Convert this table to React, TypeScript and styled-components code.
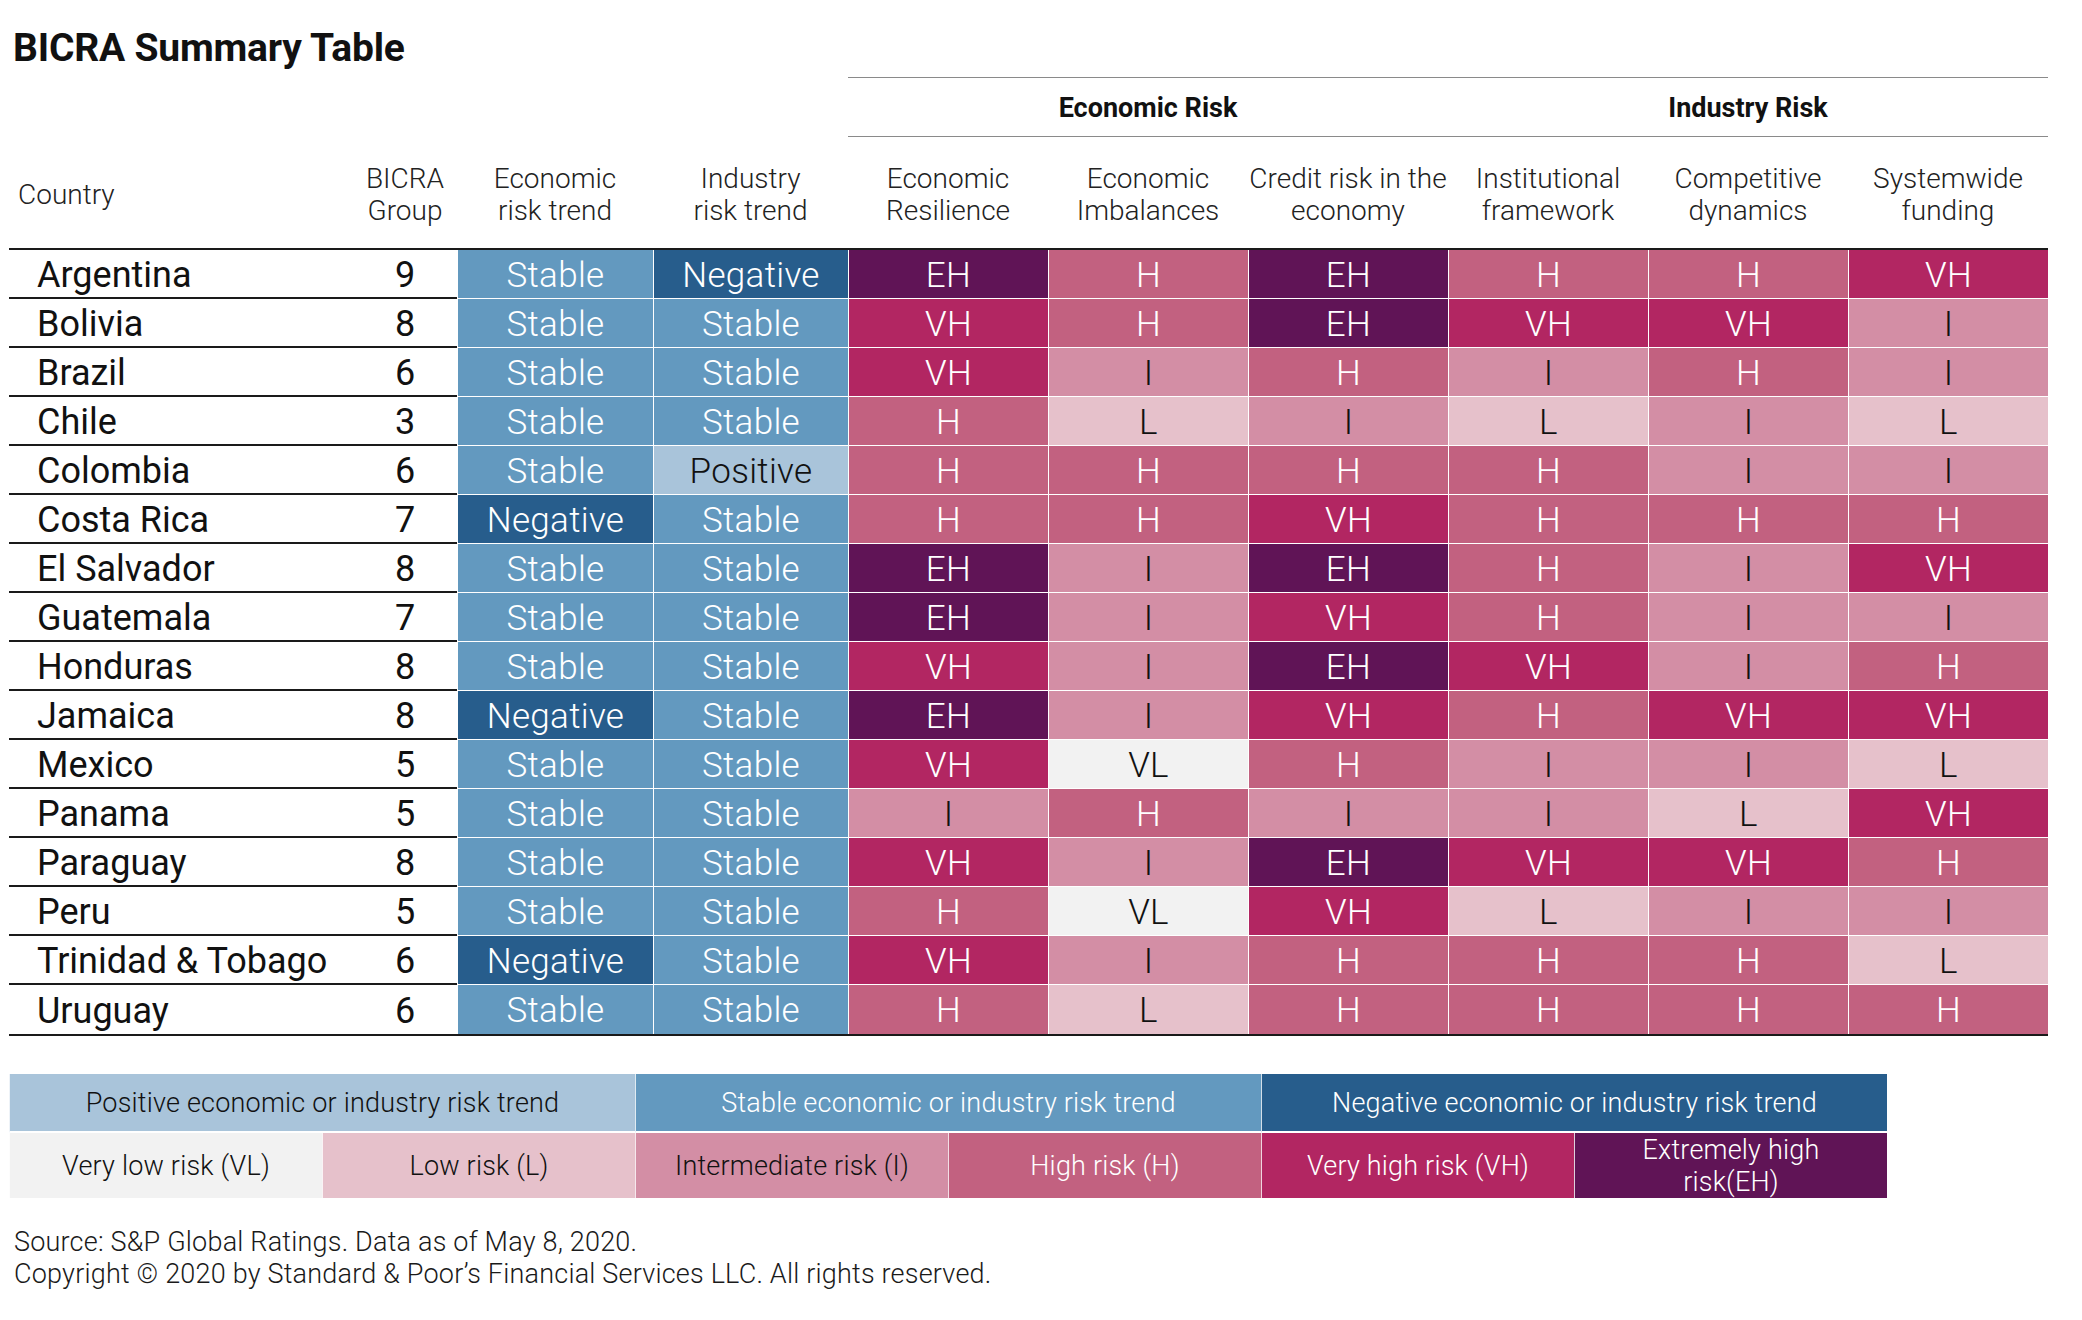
import styled, { createGlobalStyle } from "styled-components";

const GlobalStyle = createGlobalStyle`
  html, body {
    margin: 0;
    padding: 0;
    background: #fff;
  }
  body {
    font-family: Roboto, "Liberation Sans", Arial, sans-serif;
    color: #111;
  }
`;

const COLS = "344px 104px 196px 195px repeat(6, 200px)";

const TONES: Record<string, { bg: string; fg: string }> = {
  Positive: { bg: "#a9c4da", fg: "#111" },
  Stable: { bg: "#6399bf", fg: "#fff" },
  Negative: { bg: "#275d8c", fg: "#fff" },
  VL: { bg: "#f2f2f2", fg: "#111" },
  L: { bg: "#e6c1cb", fg: "#111" },
  I: { bg: "#d38ea5", fg: "#111" },
  H: { bg: "#c26180", fg: "#fff" },
  VH: { bg: "#b22662", fg: "#fff" },
  EH: { bg: "#601456", fg: "#fff" },
};

const DATA = [
  "Argentina|9|Stable|Negative|EH H EH H H VH",
  "Bolivia|8|Stable|Stable|VH H EH VH VH I",
  "Brazil|6|Stable|Stable|VH I H I H I",
  "Chile|3|Stable|Stable|H L I L I L",
  "Colombia|6|Stable|Positive|H H H H I I",
  "Costa Rica|7|Negative|Stable|H H VH H H H",
  "El Salvador|8|Stable|Stable|EH I EH H I VH",
  "Guatemala|7|Stable|Stable|EH I VH H I I",
  "Honduras|8|Stable|Stable|VH I EH VH I H",
  "Jamaica|8|Negative|Stable|EH I VH H VH VH",
  "Mexico|5|Stable|Stable|VH VL H I I L",
  "Panama|5|Stable|Stable|I H I I L VH",
  "Paraguay|8|Stable|Stable|VH I EH VH VH H",
  "Peru|5|Stable|Stable|H VL VH L I I",
  "Trinidad & Tobago|6|Negative|Stable|VH I H H H L",
  "Uruguay|6|Stable|Stable|H L H H H H",
].map((line) => {
  const [country, group, econ, ind, risks] = line.split("|");
  return { country, group, econ, ind, risks: risks.split(" ") };
});

const HEADERS = [
  ["BICRA", "Group"],
  ["Economic", "risk trend"],
  ["Industry", "risk trend"],
  ["Economic", "Resilience"],
  ["Economic", "Imbalances"],
  ["Credit risk in the", "economy"],
  ["Institutional", "framework"],
  ["Competitive", "dynamics"],
  ["Systemwide", "funding"],
];

const Page = styled.div`
  padding: 0 0 40px 9px;
  width: 2039px;
`;

const TitleBar = styled.div`
  height: 77px;
  box-sizing: border-box;
  padding: 29px 0 0 4px;
`;

const Title = styled.h1`
  margin: 0;
  font-size: 39px;
  line-height: 1;
  font-weight: 700;
  letter-spacing: -0.2px;
  color: #111;
`;

const GroupRow = styled.div`
  display: grid;
  grid-template-columns: ${COLS};
  height: 60px;
`;

const GroupLabel = styled.div`
  grid-column: span 3;
  box-sizing: border-box;
  border-top: 1.5px solid #8a8a8a;
  border-bottom: 1.5px solid #8a8a8a;
  display: flex;
  align-items: center;
  justify-content: center;
  padding-top: 2px;
  font-size: 27px;
  font-weight: 700;
  color: #111;
`;

const HeaderRow = styled.div`
  display: grid;
  grid-template-columns: ${COLS};
  height: 111px;
`;

const HeaderCell = styled.div<{ $left?: boolean }>`
  display: flex;
  flex-direction: column;
  justify-content: center;
  align-items: ${(p) => (p.$left ? "flex-start" : "center")};
  padding-left: ${(p) => (p.$left ? "9px" : "0")};
  padding-top: 4px;
  font-size: 28px;
  line-height: 32px;
  font-weight: 300;
  color: #222;
  white-space: nowrap;
`;

const Body = styled.div`
  border-top: 2px solid #1a1a1a;
  border-bottom: 2px solid #1a1a1a;
`;

const Row = styled.div`
  display: grid;
  grid-template-columns: ${COLS};
  height: 49px;
`;

const NameCell = styled.div<{ $last?: boolean }>`
  box-sizing: border-box;
  display: flex;
  align-items: center;
  padding-left: 28px;
  padding-top: 2px;
  font-size: 36px;
  font-weight: 400;
  color: #111;
  border-bottom: ${(p) => (p.$last ? "none" : "2px solid #1a1a1a")};
  white-space: nowrap;
`;

const GroupCell = styled(NameCell)`
  justify-content: center;
  padding-left: 0;
`;

const Rating = styled.div<{ $tone: string; $last?: boolean }>`
  box-sizing: border-box;
  display: flex;
  align-items: center;
  justify-content: center;
  padding-top: 2px;
  background: ${(p) => TONES[p.$tone].bg};
  color: ${(p) => TONES[p.$tone].fg};
  border-left: 1px solid #fff;
  border-bottom: ${(p) => (p.$last ? "none" : "1px solid #fff")};
  font-size: 35px;
  font-weight: 300;
  letter-spacing: 0.3px;
`;

const Legend = styled.div`
  margin-top: 38px;
  width: 1878px;
`;

const LegendRow = styled.div<{ $cols: number; $height: number }>`
  display: grid;
  grid-template-columns: repeat(${(p) => p.$cols}, 1fr);
  height: ${(p) => p.$height}px;
`;

const LegendCell = styled.div<{ $tone: string; $gap?: boolean }>`
  box-sizing: border-box;
  display: flex;
  align-items: center;
  justify-content: center;
  text-align: center;
  background: ${(p) => TONES[p.$tone].bg};
  color: ${(p) => TONES[p.$tone].fg};
  border-left: 1px solid rgba(255, 255, 255, 0.8);
  border-bottom: ${(p) => (p.$gap ? "2px solid #fff" : "none")};
  font-size: 27px;
  line-height: 32px;
  font-weight: 300;
  letter-spacing: 0.2px;
`;

const Footer = styled.div`
  margin-top: 28px;
  padding-left: 5px;
  font-size: 27px;
  line-height: 32px;
  font-weight: 300;
  letter-spacing: 0.2px;
  color: #1a1a1a;
`;

export default function App() {
  return (
    <Page>
      <GlobalStyle />
      <TitleBar>
        <Title>BICRA Summary Table</Title>
      </TitleBar>
      <GroupRow>
        <div />
        <div />
        <div />
        <div />
        <GroupLabel>Economic Risk</GroupLabel>
        <GroupLabel>Industry Risk</GroupLabel>
      </GroupRow>
      <HeaderRow>
        <HeaderCell $left>Country</HeaderCell>
        {HEADERS.map(([a, b], i) => (
          <HeaderCell key={i}>
            <span>{a}</span>
            <span>{b}</span>
          </HeaderCell>
        ))}
      </HeaderRow>
      <Body>
        {DATA.map((r, i) => {
          const last = i === DATA.length - 1;
          return (
            <Row key={r.country}>
              <NameCell $last={last}>{r.country}</NameCell>
              <GroupCell $last={last}>{r.group}</GroupCell>
              <Rating $tone={r.econ} $last={last}>
                {r.econ}
              </Rating>
              <Rating $tone={r.ind} $last={last}>
                {r.ind}
              </Rating>
              {r.risks.map((k, j) => (
                <Rating key={j} $tone={k} $last={last}>
                  {k}
                </Rating>
              ))}
            </Row>
          );
        })}
      </Body>
      <Legend>
        <LegendRow $cols={3} $height={59}>
          <LegendCell $tone="Positive" $gap>
            Positive economic or industry risk trend
          </LegendCell>
          <LegendCell $tone="Stable" $gap>
            Stable economic or industry risk trend
          </LegendCell>
          <LegendCell $tone="Negative" $gap>
            Negative economic or industry risk trend
          </LegendCell>
        </LegendRow>
        <LegendRow $cols={6} $height={65}>
          <LegendCell $tone="VL">Very low risk (VL)</LegendCell>
          <LegendCell $tone="L">Low risk (L)</LegendCell>
          <LegendCell $tone="I">Intermediate risk (I)</LegendCell>
          <LegendCell $tone="H">High risk (H)</LegendCell>
          <LegendCell $tone="VH">Very high risk (VH)</LegendCell>
          <LegendCell $tone="EH">
            Extremely high
            <br />
            risk(EH)
          </LegendCell>
        </LegendRow>
      </Legend>
      <Footer>
        <div>Source: S&amp;P Global Ratings. Data as of May 8, 2020.</div>
        <div>Copyright © 2020 by Standard &amp; Poor’s Financial Services LLC. All rights reserved.</div>
      </Footer>
    </Page>
  );
}
